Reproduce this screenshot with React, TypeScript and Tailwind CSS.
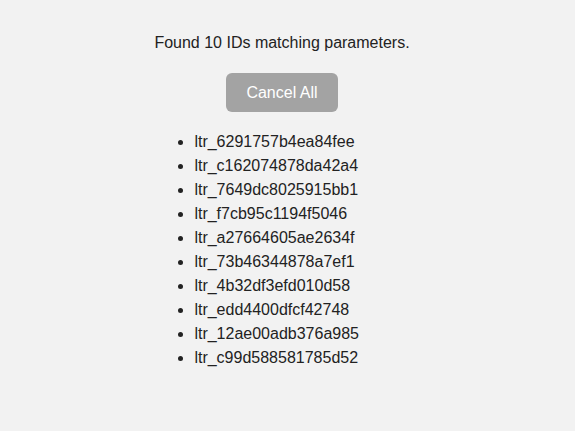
import React from 'react'

const ids = [
  'ltr_6291757b4ea84fee',
  'ltr_c162074878da42a4',
  'ltr_7649dc8025915bb1',
  'ltr_f7cb95c1194f5046',
  'ltr_a27664605ae2634f',
  'ltr_73b46344878a7ef1',
  'ltr_4b32df3efd010d58',
  'ltr_edd4400dfcf42748',
  'ltr_12ae00adb376a985',
  'ltr_c99d588581785d52',
]

export default function App() {
  return (
    <div className="min-h-screen bg-[#f2f2f2] text-[#222222] font-['Liberation_Sans',Arial,sans-serif]">
      <div className="flex w-[564px] justify-center pt-[31px]">
        <div className="w-fit">
          <p className="text-center text-base leading-6">Found {ids.length} IDs matching parameters.</p>
          <div className="mt-[18px] flex justify-center">
            <button className="h-[39px] w-[112px] rounded-md bg-[#a3a3a3] text-base text-white">
              Cancel All
            </button>
          </div>
          <ul className="mt-[18px] list-disc pl-10 text-base leading-6">
            {ids.map(id => (
              <li key={id}>{id}</li>
            ))}
          </ul>
        </div>
      </div>
    </div>
  )
}
